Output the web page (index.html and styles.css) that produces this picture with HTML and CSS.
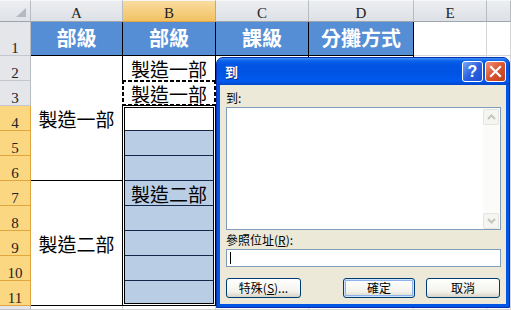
FILE: index.html
```html
<!DOCTYPE html>
<html lang="zh-Hant">
<head>
    <meta charset="UTF-8">
    <title>到</title>
    <link rel="stylesheet" href="styles.css">
</head>
<body>

<div class="sheet">
    <!-- intestazioni colonne -->
    <div class="corner">
        <svg width="12" height="10" viewBox="0 0 12 10"><polygon points="11,0 11,9 1,9" fill="#b4b9c0"/></svg>
    </div>
    <div class="ch">A</div>
    <div class="ch on">B</div>
    <div class="ch">C</div>
    <div class="ch">D</div>
    <div class="ch">E</div>
    <div class="ch"></div>

    <!-- riga 1 -->
    <div class="rh">1</div>
    <div class="hd">部級</div>
    <div class="hd">部級</div>
    <div class="hd">課級</div>
    <div class="hd">分攤方式</div>
    <div class="c"></div>
    <div class="c"></div>

    <!-- riga 2 -->
    <div class="rh">2</div>
    <div class="t mg">製造一部</div>
    <div class="t">製造一部</div>
    <div class="t"></div>
    <div class="t"></div>
    <div class="c"></div>
    <div class="c"></div>

    <!-- riga 3 -->
    <div class="rh">3</div>
    <div class="t ants">製造一部</div>
    <div class="t"></div>
    <div class="t"></div>
    <div class="c"></div>
    <div class="c"></div>

    <!-- riga 4 -->
    <div class="rh on">4</div>
    <div class="sel">
        <div class="sel-in">
            <div class="sc active"></div>
            <div class="sc"></div>
            <div class="sc"></div>
            <div class="sc">製造二部</div>
            <div class="sc"></div>
            <div class="sc"></div>
            <div class="sc"></div>
            <div class="sc last"></div>
        </div>
    </div>
    <div class="t"></div>
    <div class="t"></div>
    <div class="c"></div>
    <div class="c"></div>

    <div class="rh on">5</div>
    <div class="t"></div><div class="t"></div><div class="c"></div><div class="c"></div>

    <div class="rh on">6</div>
    <div class="t"></div><div class="t"></div><div class="c"></div><div class="c"></div>

    <div class="rh on">7</div>
    <div class="t mg">製造二部</div>
    <div class="t"></div><div class="t"></div><div class="c"></div><div class="c"></div>

    <div class="rh on">8</div>
    <div class="t"></div><div class="t"></div><div class="c"></div><div class="c"></div>

    <div class="rh on">9</div>
    <div class="t"></div><div class="t"></div><div class="c"></div><div class="c"></div>

    <div class="rh on">10</div>
    <div class="t"></div><div class="t"></div><div class="c"></div><div class="c"></div>

    <div class="rh on">11</div>
    <div class="t"></div><div class="t"></div><div class="c"></div><div class="c"></div>

    <!-- riga 12, tagliata -->
    <div class="rh"></div>
    <div class="c"></div><div class="c"></div><div class="c"></div><div class="c"></div><div class="c"></div><div class="c"></div>
</div>

<!-- finestra "到" -->
<div class="dlg">
    <div class="cap">
        <span class="cap-t">到</span>
        <span class="cap-btn help">?</span>
        <span class="cap-btn close">
            <svg width="13" height="13" viewBox="0 0 13 13"><path d="M2 2 L11 11 M11 2 L2 11" stroke="#fff" stroke-width="2.2" stroke-linecap="square"/></svg>
        </span>
    </div>
    <div class="dbody">
        <div class="lbl">到:</div>
        <div class="list">
            <div class="list-area"></div>
            <div class="vscroll">
                <span class="sb"><svg width="9" height="6" viewBox="0 0 9 6"><path d="M1 5 L4.5 1.5 L8 5" fill="none" stroke="#c8c6bb" stroke-width="2"/></svg></span>
                <span class="sb"><svg width="9" height="6" viewBox="0 0 9 6"><path d="M1 1 L4.5 4.5 L8 1" fill="none" stroke="#c8c6bb" stroke-width="2"/></svg></span>
            </div>
        </div>
        <div class="lbl lbl-ref">參照位址(<u>R</u>):</div>
        <div class="inp"><span class="caret"></span></div>
        <div class="btns">
            <button class="btn">特殊(<u>S</u>)...</button>
            <button class="btn def">確定</button>
            <button class="btn">取消</button>
        </div>
    </div>
</div>

</body>
</html>
```

FILE: styles.css
```css
body {
    margin: 0;
    width: 511px;
    height: 310px;
    overflow: hidden;
    position: relative;
    background: #fff;
    font-family: "Noto Sans CJK TC", sans-serif;
}

/* foglio */
.sheet {
    display: grid;
    grid-template-columns: 31px 92px 93px 93px 105px 73px 1fr;
    grid-template-rows: 22px 34px repeat(10, 25px) 1fr;
    height: 310px;
}

.sheet > div {
    box-sizing: border-box;
    border-right: 1px solid #d4d4d4;
    border-bottom: 1px solid #d4d4d4;
}

.corner {
    background: linear-gradient(#eceef1, #dfe2e7);
    display: flex;
    align-items: flex-end;
    justify-content: flex-end;
    padding: 0 3px 3px 0;
    border-top: 1px solid #f6f6f6;
}

.sheet > .corner,
.sheet > .ch {
    border-right-color: #b7bcc3;
    border-bottom-color: #9fa5ad;
}

.ch {
    background: linear-gradient(#eceef1, #dde0e5);
    border-top: 1px solid #f6f6f6;
    font-family: "Liberation Serif", serif;
    font-size: 15px;
    line-height: 16px;
    padding-top: 4px;
    text-align: center;
    color: #222;
}

.sheet > .ch.on {
    background: linear-gradient(#f9dc9f, #f2c264);
    border-right-color: #e2a43c;
    border-bottom-color: #e2a43c;
}

.rh {
    background: #e4e6ea;
    font-family: "Liberation Serif", serif;
    font-size: 15px;
    line-height: 14px;
    color: #222;
    display: flex;
    align-items: flex-end;
    justify-content: center;
}

.sheet > .rh {
    border-right-color: #b7bcc3;
    border-bottom-color: #c3c7cd;
}

.sheet > .rh.on {
    background: #fcd782;
    border-right-color: #e0a53c;
    border-bottom-color: #e0a53c;
}

.hd {
    background: #558ed5;
    color: #fff;
    font-weight: bold;
    font-size: 20px;
    display: flex;
    align-items: center;
    justify-content: center;
    padding-bottom: 2px;
}

.sheet > .hd,
.sheet > .t {
    border-right-color: #000;
    border-bottom-color: #000;
}

.t {
    font-size: 19px;
    line-height: 1;
    display: flex;
    align-items: center;
    justify-content: center;
}

.mg {
    grid-row: span 5;
}

/* bordo tratteggiato della copia */
.ants {
    position: relative;
}

.ants::after {
    content: "";
    position: absolute;
    top: -1px;
    left: -1px;
    right: -1px;
    bottom: -1px;
    background:
        repeating-linear-gradient(90deg, #000 0 4px, #fff 4px 6px) top / 100% 2px no-repeat,
        repeating-linear-gradient(90deg, #000 0 4px, #fff 4px 6px) bottom / 100% 2px no-repeat,
        repeating-linear-gradient(#000 0 4px, #fff 4px 6px) left / 2px 100% no-repeat,
        repeating-linear-gradient(#000 0 4px, #fff 4px 6px) right / 2px 100% no-repeat;
}

/* selezione B4:B11 */
.sheet > .sel {
    grid-row: span 8;
    margin: -1px 0 0 -1px;
    border: 1px solid #000;
    padding: 1px;
    background: #fff;
    position: relative;
    z-index: 2;
}

.sel-in {
    border: 1px solid #000;
    height: 100%;
    box-sizing: border-box;
    display: flex;
    flex-direction: column;
}

.sc {
    height: 25px;
    flex: none;
    box-sizing: border-box;
    background: #b9cde5;
    border-bottom: 1px solid #17274a;
    font-size: 19px;
    line-height: 1;
    display: flex;
    align-items: center;
    justify-content: center;
}

.sc.active {
    height: 23px;
    background: #fff;
}

.sc.last {
    flex: 1;
    border-bottom: none;
}

/* finestra di dialogo */
.dlg {
    position: absolute;
    left: 216px;
    top: 57px;
    width: 294px;
    height: 251px;
    box-sizing: border-box;
    border: 1px solid #0733b0;
    border-radius: 7px 7px 0 0;
    background: #0055e5;
    padding: 0 3px 3px 3px;
    display: flex;
    flex-direction: column;
}

.cap {
    height: 27px;
    margin: 0 -3px;
    padding: 0 3px 0 8px;
    border-radius: 6px 6px 0 0;
    background: linear-gradient(#3d8ff7 0, #0b60ea 3px, #0055e5 7px, #0053e2 50%, #0059ee 85%, #0047c9 100%);
    display: flex;
    align-items: center;
}

.cap-t {
    color: #fff;
    font-weight: bold;
    font-size: 13px;
    text-shadow: 1px 1px #0a2a8c;
    flex: 1;
}

.cap-btn {
    width: 21px;
    height: 21px;
    box-sizing: border-box;
    border: 1px solid #fff;
    border-radius: 3px;
    display: flex;
    align-items: center;
    justify-content: center;
    margin-left: 2px;
}

.help {
    background: linear-gradient(135deg, #78a8f8, #2c62e2 50%, #1c4fd0);
    color: #fff;
    font-family: "Liberation Sans", sans-serif;
    font-weight: bold;
    font-size: 16px;
}

.close {
    background: linear-gradient(135deg, #f0937a, #d9552f 50%, #c13e1c);
}

.dbody {
    flex: 1;
    background: #ece9d8;
    padding: 4px 5px 6px 6px;
    display: flex;
    flex-direction: column;
    font-size: 12px;
}

.lbl {
    height: 18px;
    line-height: 18px;
}

.lbl-ref {
    margin-top: 1px;
}

.list {
    height: 123px;
    box-sizing: border-box;
    border: 1px solid #7f9db9;
    background: #fff;
    display: flex;
}

.list-area {
    flex: 1;
}

.vscroll {
    width: 17px;
    box-sizing: border-box;
    padding: 1px 1px 0 0;
    background: #fbfbf9;
    display: flex;
    flex-direction: column;
    justify-content: space-between;
}

.sb {
    height: 16px;
    box-sizing: border-box;
    border: 1px solid #e6e5dd;
    border-radius: 2px;
    background: #f5f5f1;
    display: flex;
    align-items: center;
    justify-content: center;
}

.inp {
    height: 18px;
    box-sizing: border-box;
    border: 1px solid #7f9db9;
    background: #fff;
    padding: 2px 3px;
}

.caret {
    display: block;
    width: 1px;
    height: 12px;
    background: #000;
}

.btns {
    margin-top: 11px;
    display: flex;
    padding-right: 1px;
}

.btn {
    height: 20px;
    box-sizing: border-box;
    border: 1px solid #003c74;
    border-radius: 3px;
    background: linear-gradient(#fff, #f3f2ec 70%, #d8d3c6);
    font-family: "Noto Sans CJK TC", sans-serif;
    font-size: 12px;
    line-height: 1;
    padding: 0;
    color: #000;
    width: 74px;
}

.btn:first-child {
    width: 75px;
    margin-right: auto;
}

.btn.def {
    width: 72px;
    margin-right: 11px;
    box-shadow: inset 0 0 0 1px #cde4ff, inset 0 0 0 2px #8fb2ec;
}
```
